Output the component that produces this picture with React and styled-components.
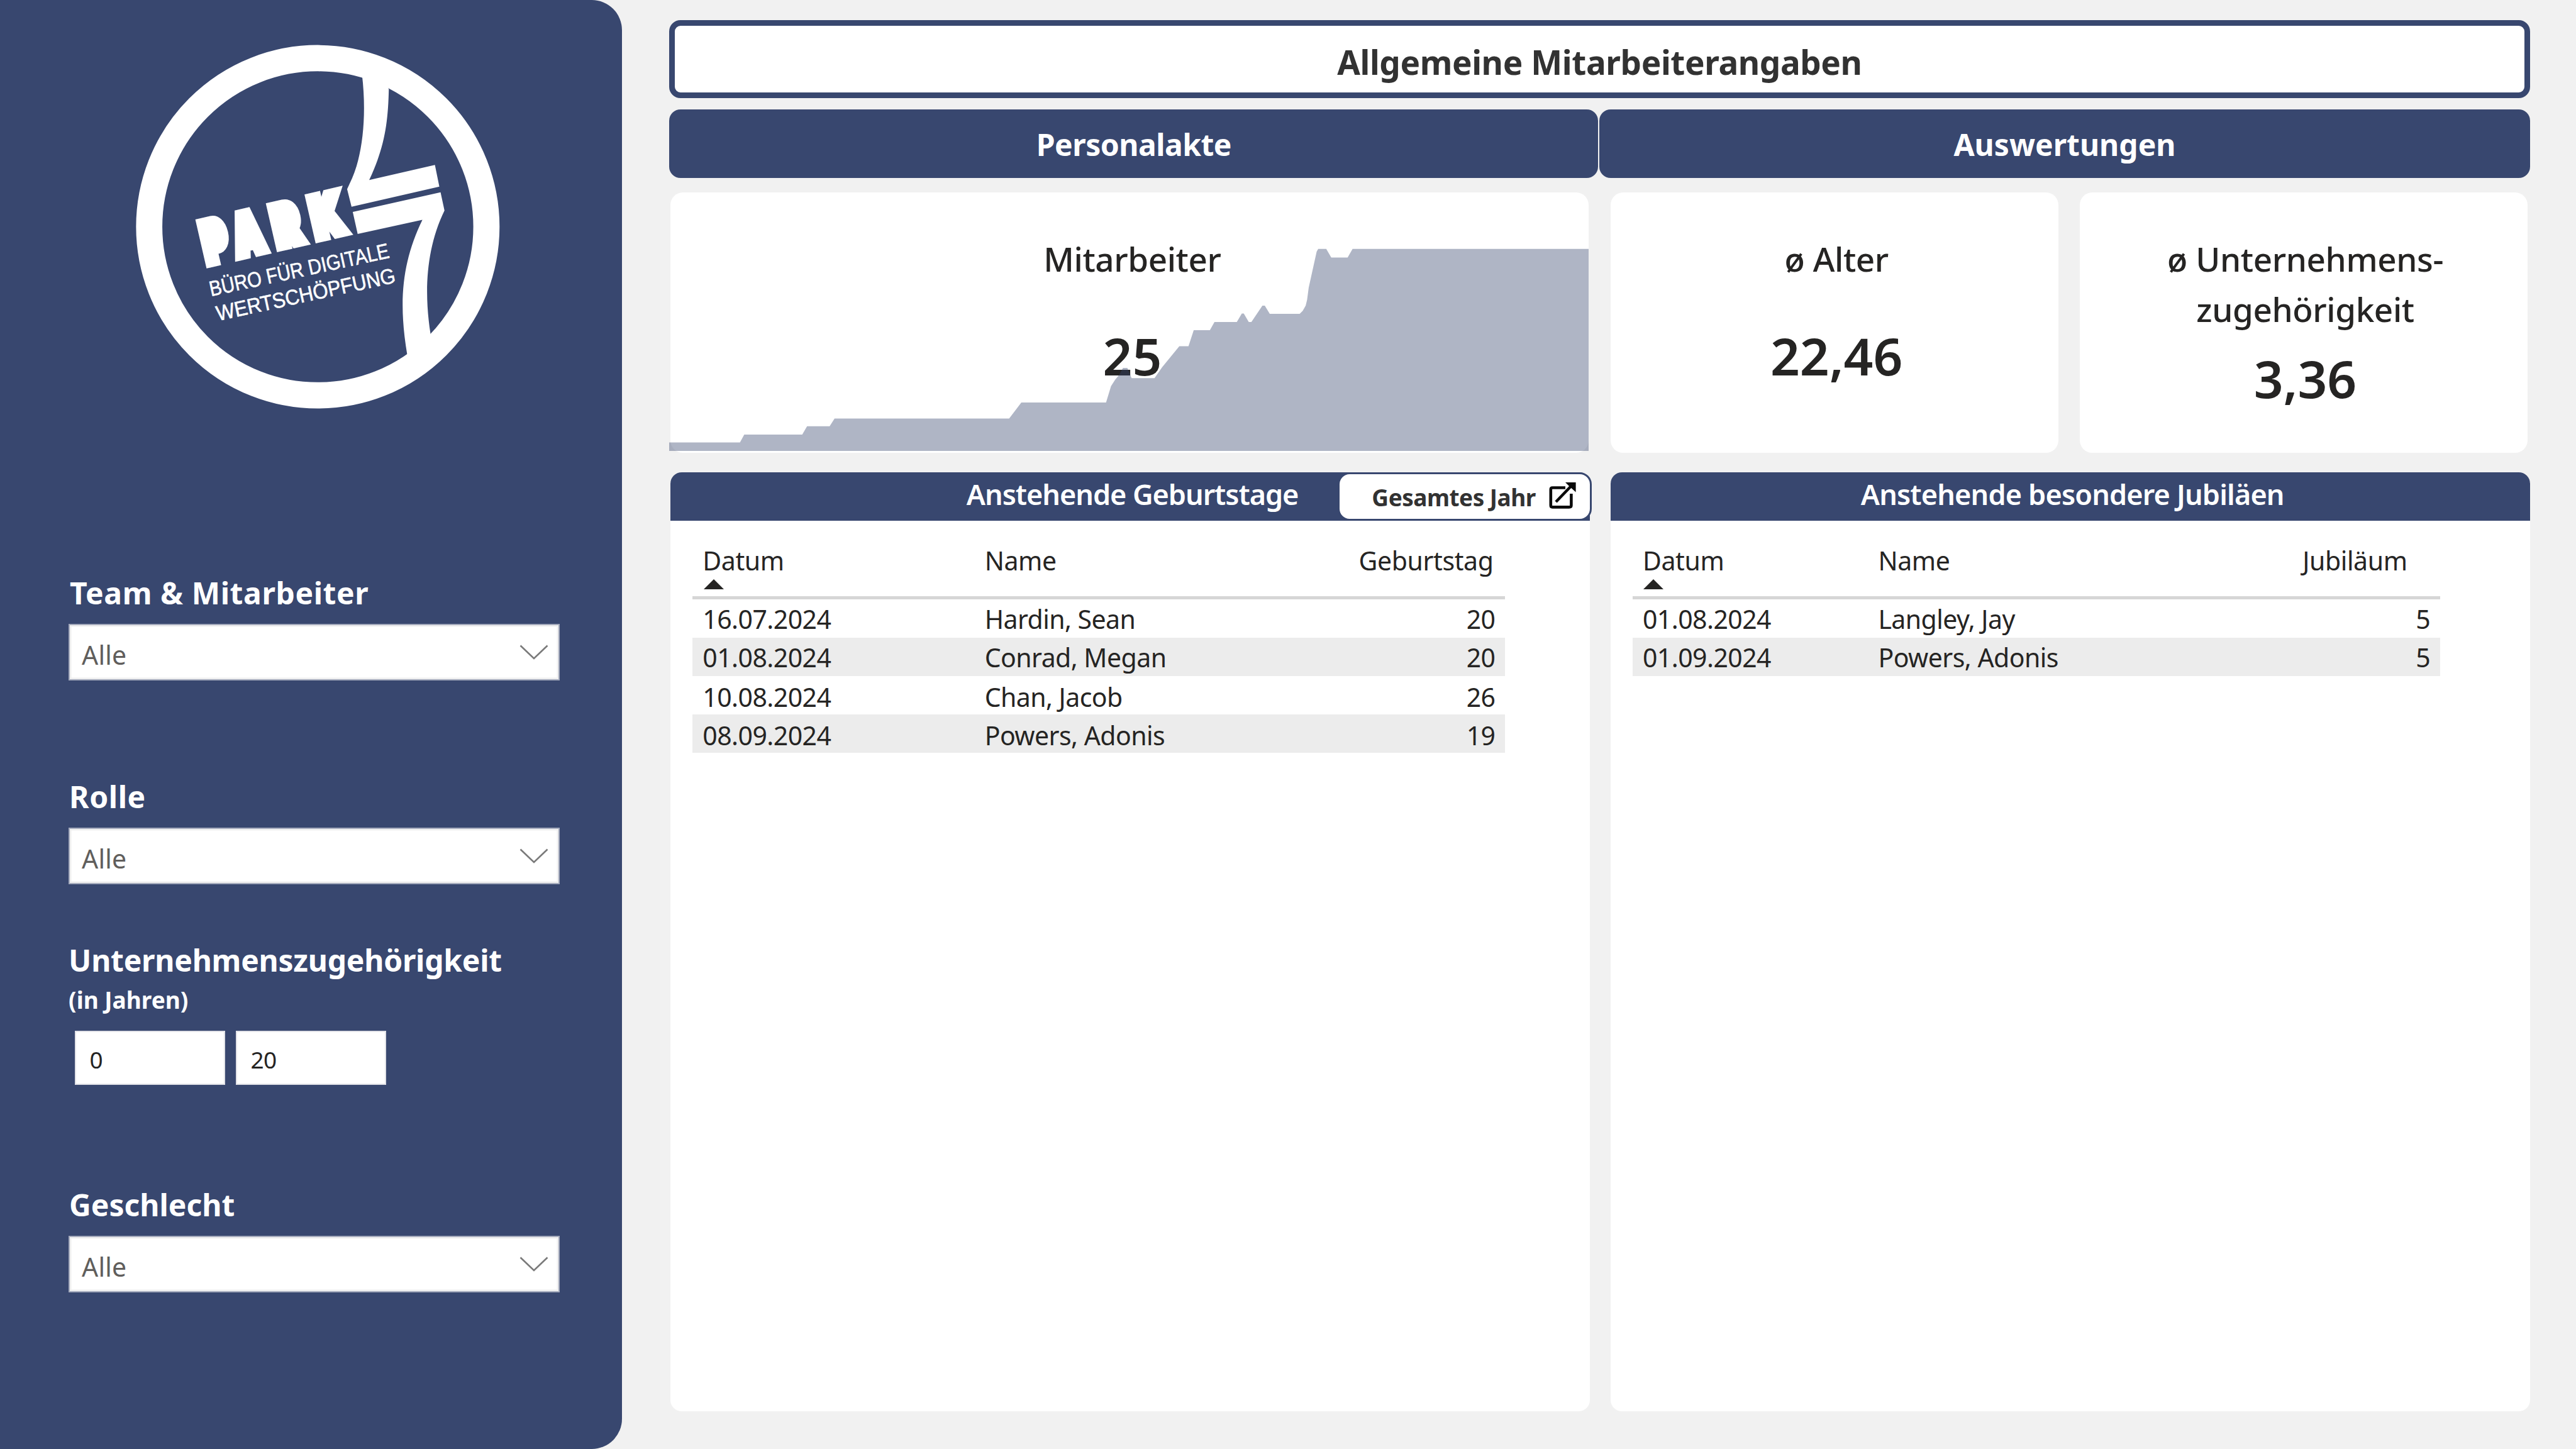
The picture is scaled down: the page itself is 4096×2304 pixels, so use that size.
import React from "react";
import styled, { createGlobalStyle } from "styled-components";

const NAVY = "#38476f";

const GlobalStyle = createGlobalStyle`
  * { box-sizing: border-box; }
  body {
    margin: 0;
    background: #f1f1f1;
    font-family: "Noto Sans", "Open Sans", sans-serif;
    color: #252423;
  }
`;

const Page = styled.div`
  display: flex;
  width: 4096px;
  height: 2304px;
  overflow: hidden;
  background: #f1f1f1;
`;

/* ---------- Sidebar ---------- */

const Sidebar = styled.aside`
  flex: none;
  width: 989px;
  height: 2304px;
  padding: 57px 0 0 109.1px;
  border-radius: 0 48px 48px 0;
  background: ${NAVY};
`;

const LogoSvg = styled.svg`
  display: block;
  width: 611.5px;
  height: 611.5px;
  margin-left: 90px;
`;

const FilterGroup = styled.section`
  margin-top: ${(p) => p.$gap}px;
`;

const FilterLabel = styled.div`
  height: 60px;
  padding-left: ${(p) => p.$indent || 0}px;
  line-height: 60px;
  font-size: 48px;
  font-weight: 700;
  letter-spacing: ${(p) => p.$ls || 0}px;
  color: #fff;
  white-space: nowrap;
`;

const FilterHint = styled.div`
  height: 46px;
  margin-top: 10.2px;
  line-height: 46px;
  font-size: 37px;
  font-weight: 700;
  color: #fff;
`;

const Dropdown = styled.div`
  display: flex;
  align-items: center;
  justify-content: space-between;
  width: 781px;
  height: 90px;
  margin-top: 19.3px;
  padding: 8px 16px 0 19px;
  border: 2.5px solid #a4aabc;
  background: #fff;
  box-shadow: inset 0 0 0 2.5px #f0f0f0;
  font-size: 41px;
  letter-spacing: 0.2px;
  color: #605e5c;
`;

const Chevron = styled.svg`
  width: 46px;
  height: 24px;
  margin-top: -8px;
`;

const RangeInputs = styled.div`
  display: flex;
  gap: 17px;
  margin-top: 26.6px;
  padding-left: 10.4px;
`;

const NumberBox = styled.div`
  display: flex;
  align-items: center;
  width: 239px;
  height: 86px;
  padding: 4px 0 0 21px;
  border: 2px solid #e2e3e8;
  background: #fff;
  font-size: 37px;
  letter-spacing: -0.6px;
`;

/* ---------- Main ---------- */

const Main = styled.main`
  display: flex;
  flex-direction: column;
  width: 3033.5px;
  padding: 32px 0 0 75.4px;
`;

const TitleBar = styled.h1`
  display: flex;
  align-items: center;
  justify-content: center;
  height: 123.5px;
  margin: 0;
  padding-top: 10px;
  border: 9px solid ${NAVY};
  border-radius: 18px;
  background: #fff;
  font-size: 53px;
  font-weight: 700;
  letter-spacing: -0.4px;
  color: #323232;
`;

const Tabs = styled.nav`
  display: grid;
  grid-template-columns: 1477px 1fr;
  gap: 2px;
  margin-top: 18.7px;
`;

const Tab = styled.div`
  display: flex;
  align-items: center;
  justify-content: center;
  height: 109px;
  padding-top: 2px;
  border-radius: 18px;
  background: ${NAVY};
  color: #fff;
  font-size: 48px;
  font-weight: 700;
  letter-spacing: ${(p) => p.$ls || 0}px;
`;

const Kpis = styled.div`
  display: grid;
  grid-template-columns: 1460px 712px 712px;
  gap: 34.3px;
  margin-top: 23px;
  padding-left: 2px;
`;

const Card = styled.section`
  position: relative;
  height: 414.2px;
  padding: 66px 0 0 ${(p) => p.$shift || 0}px;
  border-radius: 20px;
  background: #fff;
  text-align: center;
`;

const KpiLabel = styled.div`
  line-height: 80px;
  font-size: 53px;
  font-weight: 540;
  letter-spacing: -0.4px;
`;

const KpiValue = styled.div`
  margin-top: ${(p) => p.$gap}px;
  line-height: 100px;
  font-size: 82px;
  font-weight: 570;
`;

/* sparkline washes over the card contents */
const Spark = styled.svg`
  position: absolute;
  left: -2px;
  bottom: 3px;
  width: 1462px;
  height: 324px;
`;

const Panels = styled.div`
  display: grid;
  grid-template-columns: 1fr 1fr;
  gap: 33.2px;
  margin-top: 30.2px;
  padding-left: 2px;
`;

const Panel = styled.section`
  height: 1493px;
  border-radius: 18px;
  background: #fff;
`;

const PanelHead = styled.header`
  position: relative;
  display: flex;
  align-items: center;
  justify-content: center;
  height: 77.5px;
  padding: 0 0 8px 7px;
  border-radius: 18px 18px 0 0;
  background: ${NAVY};
  color: #fff;
  font-size: 45px;
  font-weight: 650;
  letter-spacing: ${(p) => p.$ls}px;
`;

const HeadButton = styled.div`
  position: absolute;
  top: 0;
  right: -3px;
  display: flex;
  align-items: center;
  width: 403.5px;
  height: 77px;
  padding: 3px 0 0 51px;
  border: 3.5px solid ${NAVY};
  border-radius: 19px;
  background: #fff;
  color: #323232;
  font-size: 37px;
  font-weight: 700;
  letter-spacing: -0.5px;
`;

const OpenIcon = styled.svg`
  width: 44px;
  height: 44px;
  margin: -7px 0 0 21px;
`;

const Table = styled.div`
  width: ${(p) => p.$width}px;
  margin-left: 34.9px;
`;

const Row = styled.div`
  display: grid;
  grid-template-columns: ${(p) => p.$cols};
`;

const HeadCell = styled.div`
  height: 125.3px;
  padding: 38px ${(p) => p.$pr || 0}px 0 16px;
  border-bottom: 5.3px solid #d6d6d6;
  line-height: 50px;
  font-size: 41px;
  font-weight: 380;
  text-align: ${(p) => (p.$right ? "right" : "left")};
  letter-spacing: -0.4px;
`;

const Cell = styled.div`
  height: 60.9px;
  padding: ${(p) => (p.$drop ? 3.5 : 1.8)}px 15.5px 0 16px;
  background: ${(p) => (p.$shade ? "#ececec" : "#fff")};
  line-height: 59px;
  font-size: 41px;
  font-weight: 380;
  letter-spacing: -0.55px;
  text-align: ${(p) => (p.$right ? "right" : "left")};
  white-space: nowrap;
`;

const SortMark = styled.svg`
  display: block;
  width: 32px;
  height: 16px;
  margin: 5px 0 0 1.5px;
`;

function Logo() {
  const letters = [
    ["P", 8.3, 0.683],
    ["A", 137.5, 0.674],
    ["R", 304, 0.728],
    ["K", 466, 0.73],
  ];
  return (
    <LogoSvg viewBox="0 0 1568 1568">
      <circle cx="785.5" cy="778.5" r="687.5" fill="none" stroke="#fff" strokeWidth="107" />
      <path
        fill="#fff"
        d="M966 160C986 330 968 500 915 603L905 625L923 697L1281 615L1263 526L995 588C1060 450 1072 350 1075 217L1040 150Z"
      />
      <path
        fill="#fff"
        d="M928 718L1286 638L1302 712C1225 870 1219 1050 1245 1215L1220 1290L1150 1300C1113 1080 1130 920 1212 750L948 808Z"
      />
      <g
        transform="translate(332 948) rotate(-12.9)"
        fill="#fff"
        stroke="#fff"
        strokeWidth="46"
        strokeMiterlimit="2.4"
      >
        {letters.map(([ch, x, sx]) => (
          <text
            key={ch}
            transform={`translate(${x} -23) scale(${sx} 1)`}
            fontFamily="Inter, sans-serif"
            fontWeight="900"
            fontSize="218"
          >
            {ch}
          </text>
        ))}
      </g>
      <g fill="#fff" stroke="#fff" strokeWidth="1.5" fontFamily="Liberation Sans, sans-serif" fontSize="87">
        <text transform="translate(350 1062) rotate(-12.2)" textLength="748" lengthAdjust="spacingAndGlyphs">
          BÜRO FÜR DIGITALE
        </text>
        <text transform="translate(378 1162) rotate(-12.2)" textLength="745" lengthAdjust="spacingAndGlyphs">
          WERTSCHÖPFUNG
        </text>
      </g>
    </LogoSvg>
  );
}

function Select() {
  return (
    <Dropdown>
      <span>Alle</span>
      <Chevron viewBox="0 0 46 24">
        <path d="M1.5 1.5L23 22L44.5 1.5" fill="none" stroke="#7a7a7a" strokeWidth="2.6" />
      </Chevron>
    </Dropdown>
  );
}

const SPARK = [
  [1064.4, 703.6], [1177, 703.6], [1183.8, 690.9], [1276, 690.9], [1283.7, 677.7],
  [1319.6, 677.7], [1327.4, 665.5], [1605, 665.5], [1624.4, 639.9], [1759.1, 639.9],
  [1767, 614], [1773.4, 604], [1780, 596], [1786, 585], [1793, 585], [1799.7, 601.2],
  [1836.2, 601.2], [1848, 584.3], [1875.6, 550.4], [1890.2, 550.4], [1898.5, 524.9],
  [1924.2, 524.9], [1931.5, 512], [1967, 512], [1975, 498.5], [1978.1, 498.5],
  [1986, 512], [1990.2, 512], [2007.7, 486], [2011.5, 486], [2019.4, 499],
  [2067, 499], [2071.8, 494.2], [2076.5, 486], [2078.8, 476.5], [2081.3, 457.5],
  [2094, 400], [2096.5, 395.8], [2109.2, 395.8], [2117.2, 409.5], [2143.2, 409.5],
  [2151.1, 395.8], [2526.4, 395.8], [2526.4, 717], [1064.4, 717],
];

function Sparkline() {
  return (
    <Spark viewBox="1064.4 393 1462 324">
      <polygon points={SPARK.map((p) => p.join(",")).join(" ")} fill={NAVY} fillOpacity="0.4" />
    </Spark>
  );
}

function DataTable({ width, cols, heads, rows, headPad }) {
  return (
    <Table $width={width}>
      <Row $cols={cols}>
        {heads.map((h, i) => (
          <HeadCell key={h} $right={i === 2} $pr={i === 2 ? headPad : 0}>
            {h}
            {i === 0 && (
              <SortMark viewBox="0 0 32 16">
                <path d="M0 16L16 0L32 16Z" fill="#252423" />
              </SortMark>
            )}
          </HeadCell>
        ))}
      </Row>
      {rows.map((r, n) => (
        <Row key={r[0]} $cols={cols}>
          {r.map((c, i) => (
            <Cell key={i} $right={i === 2} $shade={n % 2 === 1} $drop={n > 1}>
              {c}
            </Cell>
          ))}
        </Row>
      ))}
    </Table>
  );
}

export default function App() {
  return (
    <Page>
      <GlobalStyle />
      <Sidebar>
        <Logo />
        <FilterGroup $gap={244.4}>
          <FilterLabel $indent={2} $ls={0.6}>Team &amp; Mitarbeiter</FilterLabel>
          <Select />
        </FilterGroup>
        <FilterGroup $gap={154.4}>
          <FilterLabel $indent={1} $ls={0.6}>Rolle</FilterLabel>
          <Select />
        </FilterGroup>
        <FilterGroup $gap={90.7}>
          <FilterLabel $ls={-0.25}>Unternehmenszugehörigkeit</FilterLabel>
          <FilterHint>(in Jahren)</FilterHint>
          <RangeInputs>
            <NumberBox>0</NumberBox>
            <NumberBox>20</NumberBox>
          </RangeInputs>
        </FilterGroup>
        <FilterGroup $gap={160.8}>
          <FilterLabel $indent={1}>Geschlecht</FilterLabel>
          <Select />
        </FilterGroup>
      </Sidebar>

      <Main>
        <TitleBar>Allgemeine Mitarbeiterangaben</TitleBar>
        <Tabs>
          <Tab $ls={-0.5}>Personalakte</Tab>
          <Tab>Auswertungen</Tab>
        </Tabs>
        <Kpis>
          <Card $shift={8}>
            <KpiLabel>Mitarbeiter</KpiLabel>
            <KpiValue $gap={62.5}>25</KpiValue>
            <Sparkline />
          </Card>
          <Card $shift={7}>
            <KpiLabel>ø Alter</KpiLabel>
            <KpiValue $gap={62.5}>22,46</KpiValue>
          </Card>
          <Card $shift={5}>
            <KpiLabel>
              ø Unternehmens-
              <br />
              zugehörigkeit
            </KpiLabel>
            <KpiValue $gap={18.4}>3,36</KpiValue>
          </Card>
        </Kpis>
        <Panels>
          <Panel>
            <PanelHead $ls={-1.05}>
              Anstehende Geburtstage
              <HeadButton>
                Gesamtes Jahr
                <OpenIcon viewBox="0 0 44 44" fill="none" stroke="#0a0a0a" strokeWidth="4.6">
                  <path d="M26 10.5H5.5Q2.8 10.5 2.8 13.2V38.5Q2.8 41.4 5.5 41.4H32Q35.4 41.4 35.4 38.5V20" />
                  <path d="M11 33L36 7" />
                  <path d="M26 2H42.6V17.5L36.5 12L31 7Z" fill="#0a0a0a" stroke="none" />
                </OpenIcon>
              </HeadButton>
            </PanelHead>
            <DataTable
              width={1291.7}
              cols="448.4px 594.9px 248.4px"
              headPad={20}
              heads={["Datum", "Name", "Geburtstag"]}
              rows={[
                ["16.07.2024", "Hardin, Sean", "20"],
                ["01.08.2024", "Conrad, Megan", "20"],
                ["10.08.2024", "Chan, Jacob", "26"],
                ["08.09.2024", "Powers, Adonis", "19"],
              ]}
            />
          </Panel>
          <Panel>
            <PanelHead $ls={-0.85}>Anstehende besondere Jubiläen</PanelHead>
            <DataTable
              width={1283.7}
              cols="374.5px 671.6px 237.6px"
              headPad={52}
              heads={["Datum", "Name", "Jubiläum"]}
              rows={[
                ["01.08.2024", "Langley, Jay", "5"],
                ["01.09.2024", "Powers, Adonis", "5"],
              ]}
            />
          </Panel>
        </Panels>
      </Main>
    </Page>
  );
}
